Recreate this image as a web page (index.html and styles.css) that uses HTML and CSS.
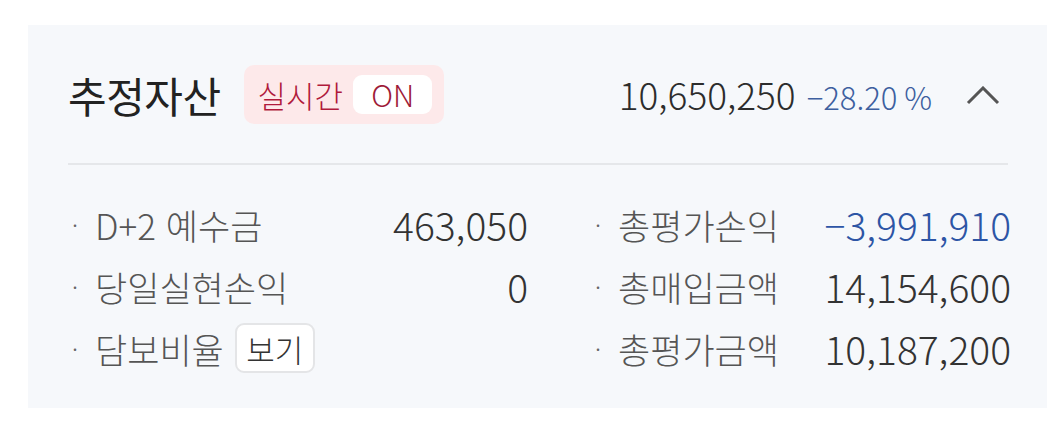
FILE: index.html
```html
<!DOCTYPE html>
<html lang="ko">
<head>
<meta charset="utf-8">
<link rel="stylesheet" href="styles.css">
</head>
<body>
<div class="page">
  <section class="card">
    <header class="head">
      <h1 class="title">추정자산</h1>
      <div class="badge"><span class="badge-label">실시간</span><span class="badge-on">ON</span></div>
      <div class="total">
        <span class="total-value">10,650,250</span>
        <span class="total-rate">−28.20 %</span>
      </div>
      <button class="toggle" aria-label="접기">
        <svg width="34" height="20" viewBox="0 0 34 20"><path d="M2 17 L17 2 L32 17" fill="none" stroke="#555" stroke-width="3"/></svg>
      </button>
    </header>
    <div class="grid">
      <div class="col">
        <div class="row"><span class="label"><i class="dot">·</i>D+2 예수금</span><span class="value">463,050</span></div>
        <div class="row"><span class="label"><i class="dot">·</i>당일실현손익</span><span class="value">0</span></div>
        <div class="row"><span class="label"><i class="dot">·</i>담보비율<button class="view">보기</button></span></div>
      </div>
      <div class="col">
        <div class="row"><span class="label"><i class="dot">·</i>총평가손익</span><span class="value neg">−3,991,910</span></div>
        <div class="row"><span class="label"><i class="dot">·</i>총매입금액</span><span class="value">14,154,600</span></div>
        <div class="row"><span class="label"><i class="dot">·</i>총평가금액</span><span class="value">10,187,200</span></div>
      </div>
    </div>
  </section>
</div>
</body>
</html>
```
FILE: styles.css
```css
* { box-sizing: border-box; }
html, body { margin: 0; padding: 0; background: #ffffff; }
body { font-family: "Noto Sans CJK KR", "Noto Sans", sans-serif; color: #333; }
.page { padding: 25px 0 0 28px; }
.card {
  background: #f6f8fb;
  height: 383px;
  padding: 0 39px 0 40px;
}
.head {
  display: flex;
  align-items: center;
  height: 140px;
  border-bottom: 2px solid #e5e7ea;
}
.title {
  margin: 0;
  font-size: 42px;
  font-weight: 400;
  color: #222;
  letter-spacing: -0.5px;
}
.badge {
  margin-left: 23px;
  display: flex;
  align-items: center;
  height: 59px;
  padding: 0 12px 0 14px;
  background: #fde9ea;
  border-radius: 10px;
}
.badge-label { font-size: 31px; color: #b01a3c; font-weight: 300; }
.badge-on {
  margin-left: 10px;
  width: 79px;
  height: 39px;
  display: flex;
  align-items: center;
  justify-content: center;
  background: #fff;
  border-radius: 9px;
  font-size: 30px;
  font-weight: 300;
  color: #9e1a38;
}
.total { margin-left: auto; display: flex; align-items: baseline; gap: 11px; }
.total-value { font-size: 37px; font-weight: 300; color: #2c2c2c; }
.total-rate { font-size: 31px; font-weight: 300; color: #3d5f9f; }
.toggle {
  margin-left: 34px;
  margin-right: 8px;
  margin-top: 4px;
  border: 0;
  background: none;
  padding: 0;
  display: flex;
}
.grid {
  display: grid;
  grid-template-columns: 460px 1fr;
  column-gap: 63px;
  padding-top: 28px;
  margin-right: -3px;
}
.row {
  height: 62px;
  display: flex;
  align-items: center;
  justify-content: space-between;
  font-size: 35px;
  font-weight: 300;
}
.label { display: flex; align-items: center; color: #555; }
.dot { font-style: normal; width: 27px; padding-left: 4px; font-size: 24px; color: #666; }
.value { color: #333; font-size: 39px; }
.value.neg { color: #2d55a5; }
.view {
  margin-left: 11px;
  height: 50px;
  width: 80px;
  background: #fff;
  border: 2px solid #e4e5e7;
  border-radius: 9px;
  font-family: inherit;
  font-size: 31px;
  font-weight: 300;
  color: #333;
  padding: 0;
}
```
